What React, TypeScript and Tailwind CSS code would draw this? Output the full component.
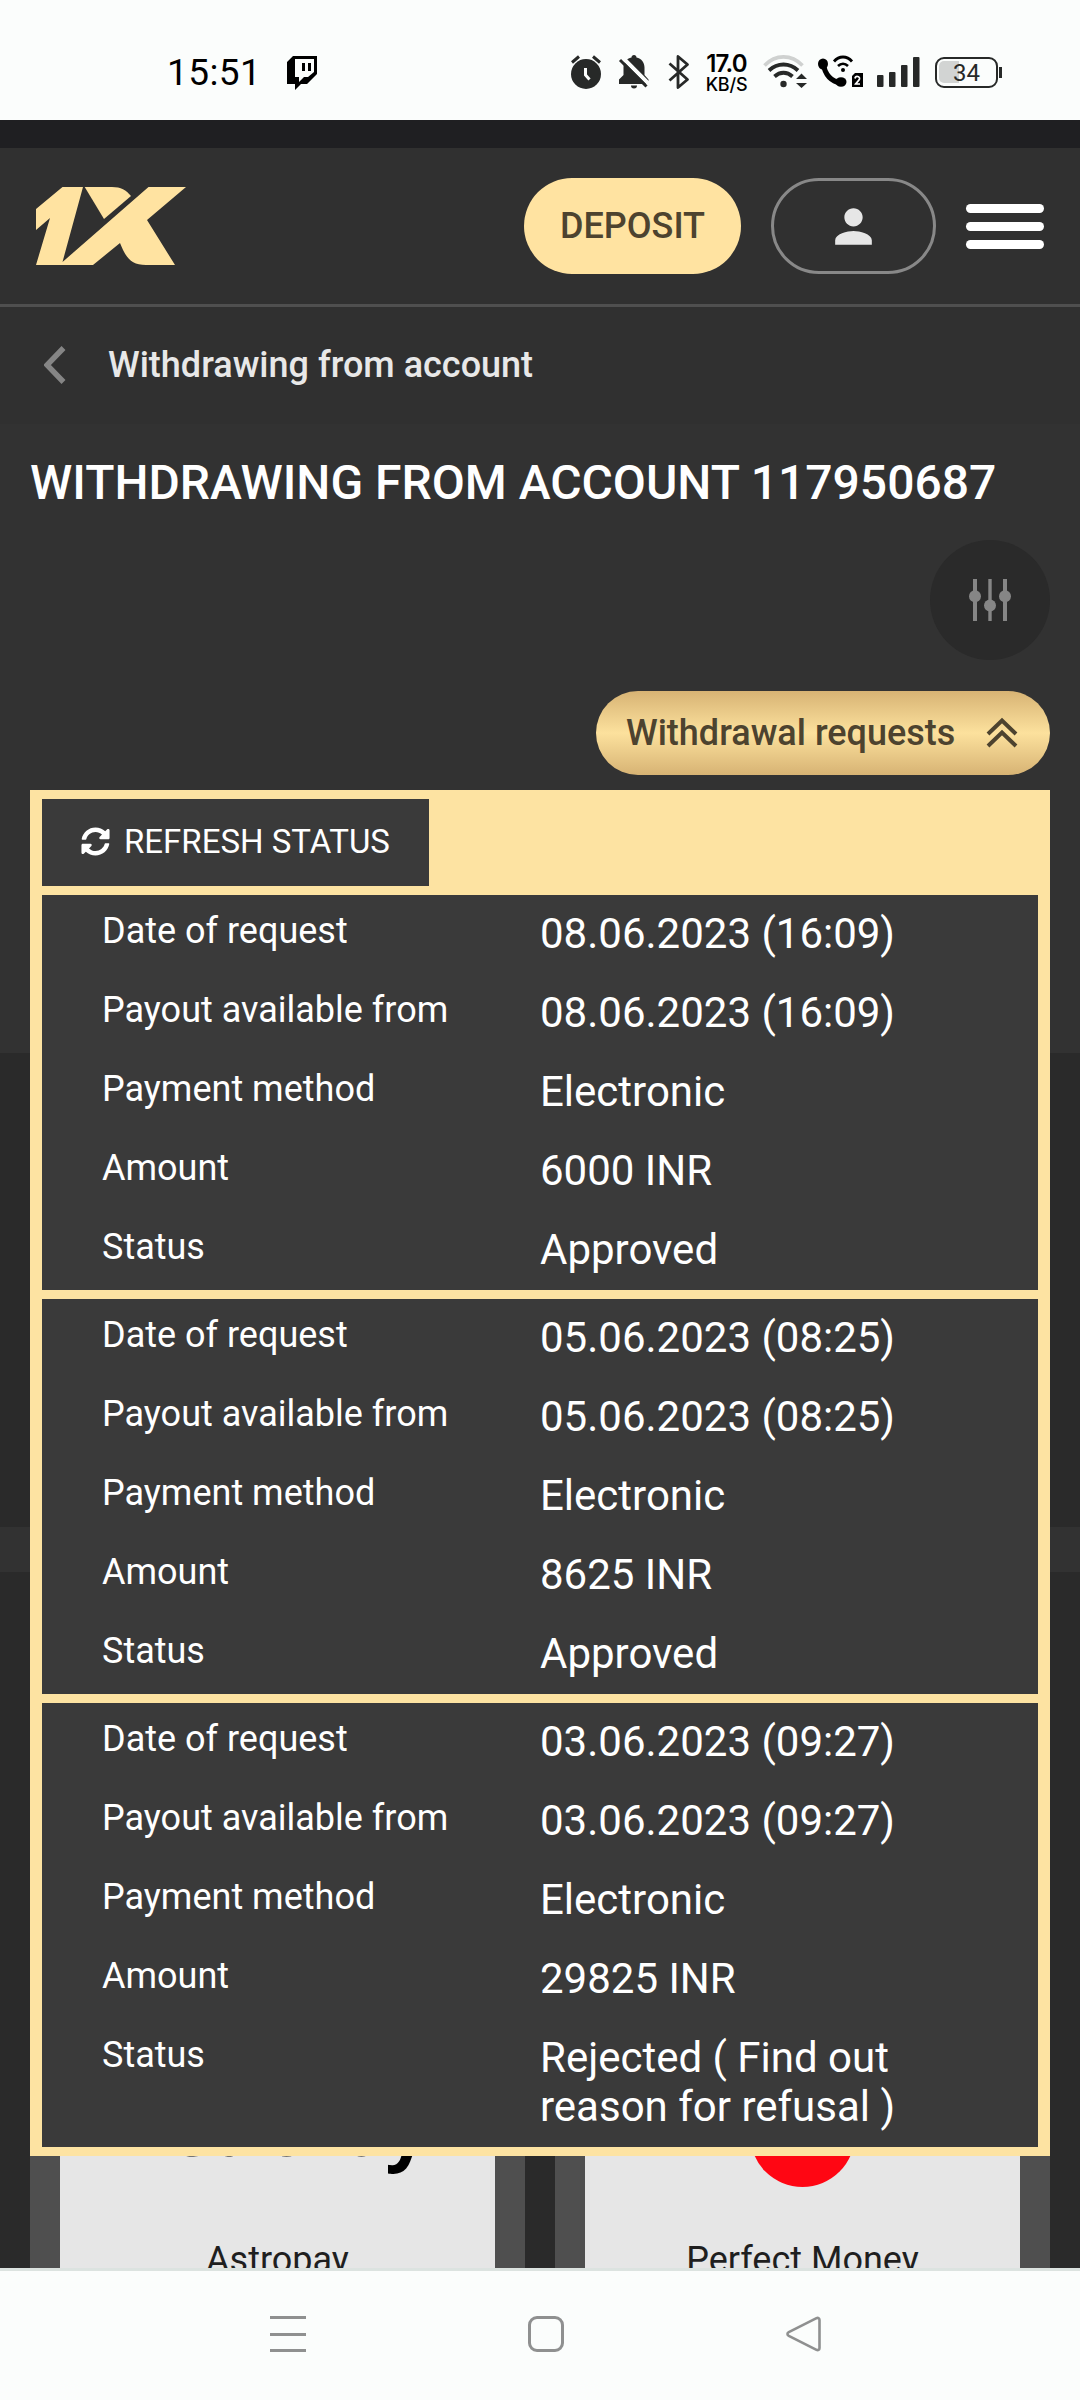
import { FaSyncAlt } from "react-icons/fa";
import { MdPerson } from "react-icons/md";

type Request = {
  date: string;
  payout: string;
  method: string;
  amount: string;
  status: string;
};

const requests: Request[] = [
  { date: "08.06.2023 (16:09)", payout: "08.06.2023 (16:09)", method: "Electronic", amount: "6000 INR", status: "Approved" },
  { date: "05.06.2023 (08:25)", payout: "05.06.2023 (08:25)", method: "Electronic", amount: "8625 INR", status: "Approved" },
  {
    date: "03.06.2023 (09:27)",
    payout: "03.06.2023 (09:27)",
    method: "Electronic",
    amount: "29825 INR",
    status: "Rejected ( Find out reason for refusal )",
  },
];

const StatusBar = () => (
  <div className="flex h-[120px] shrink-0 items-start bg-[#fbfdfc] pl-[167px] pt-[52px] text-black">
    <span className="-mt-px w-[120px] text-[37px] leading-[43px] tracking-[0.4px]">15:51</span>
    <svg className="mt-[3px]" width="32" height="36" viewBox="0 0 32 36">
      <path d="M6 1H30V19L20 29H14L8 35V29H0V7Z" fill="#000" />
      <path d="M8 4H27V17L21 22H17L12 27V22H8Z" fill="#fbfdfc" />
      <path d="M15 8h3v8h-3zM21 8h3v8h-3z" fill="#000" />
    </svg>

    <div className="ml-[250px] flex h-[40px] items-start">
      {/* alarm */}
      <svg width="34" height="40" viewBox="0 0 34 40">
        <circle cx="17" cy="22" r="15" fill="#272928" />
        <path d="M3 10.5L10 4.5M31 10.5L24 4.5" stroke="#272928" strokeWidth="3" />
        <path d="M16.500 16V23L20.500 27.500" stroke="#fbfdfc" strokeWidth="3" fill="none" />
      </svg>
      {/* muted bell */}
      <svg className="ml-[15px]" width="32" height="40" viewBox="0 0 32 40">
        <path d="M16 3c1.500 0 2.500 1 2.500 2.400 5 1.100 8 5 8 10V23l4 4.500V32H1v-4.500L5.500 23v-7.500C5.500 10 8.500 6.500 13.500 5.400 13.500 4 14.500 3 16 3Z" fill="#272928" />
        <path d="M13 33.500h6a3 3 0 0 1-6 0Z" fill="#272928" />
        <path d="M4 5L31 32" stroke="#fbfdfc" strokeWidth="4" />
        <path d="M2 8L28.500 34.500" stroke="#272928" strokeWidth="3" />
      </svg>
      {/* bluetooth */}
      <svg className="ml-[18px]" width="22" height="40" viewBox="0 0 22 40">
        <path d="M1.500 11.500L19.500 27.500L10 35.500V4.500L19.500 12.500L1.500 28.500" stroke="#272928" strokeWidth="2.800" fill="none" strokeLinejoin="round" />
      </svg>
      <div className="ml-[14px] flex w-[45px] flex-col items-center gap-[2px] pt-[2px] font-['Inter'] font-semibold">
        <span className="text-[24px] leading-[20px] tracking-[-0.8px]">17.0</span>
        <span className="text-[18px] font-medium leading-[18px] tracking-[-0.2px]">KB/S</span>
      </div>
      {/* wifi */}
      <svg className="ml-[14px]" width="46" height="40" viewBox="0 0 46 40" fill="none">
        <path d="M1.500 13.500C12.500 2 28.500 2 39.500 13.500" stroke="#cfd1d0" strokeWidth="3.600" />
        <path d="M6 18.500C14.500 10.500 26.500 10.500 35 18.500" stroke="#272928" strokeWidth="3.800" />
        <path d="M11.500 24.500C17 19.500 24 19.500 29.500 24.500" stroke="#272928" strokeWidth="3.800" />
        <circle cx="20.500" cy="32" r="3.200" fill="#272928" />
        <path d="M33 27L38.500 21.500L44 27ZM33 31L44 31L38.500 36Z" fill="#272928" />
      </svg>
      {/* wifi calling */}
      <svg className="ml-[9px]" width="48" height="40" viewBox="0 0 48 40" fill="none">
        <path d="M5 11C7 23 13 29.500 23 31" stroke="#000" strokeWidth="5" />
        <ellipse cx="5" cy="12" rx="5" ry="5.500" fill="#000" />
        <ellipse cx="23" cy="30" rx="5.500" ry="4.800" fill="#000" />
        <path d="M16 9.500C21 3.500 29 3.500 34 9.500" stroke="#000" strokeWidth="2.800" />
        <path d="M20 14C23 11 27 11 30 14" stroke="#000" strokeWidth="2.600" />
        <circle cx="25" cy="18" r="2" fill="#000" />
        <path d="M37 21H45V35H34V24Z" fill="#000" />
        <path d="M37 26.500C37.500 23.500 42 24 41.500 27C41.200 28.500 38 31 37.500 32H42" stroke="#fff" strokeWidth="1.700" />
      </svg>
      {/* signal */}
      <svg className="ml-[11px]" width="44" height="40" viewBox="0 0 44 40" fill="#272928">
        <rect x="0" y="23" width="6.500" height="12" rx="1" />
        <rect x="12" y="20" width="6.500" height="15" rx="1" />
        <rect x="24" y="13" width="6.500" height="22" rx="1" />
        <rect x="36" y="5" width="6.500" height="30" rx="1" />
      </svg>
      {/* battery */}
      <div className="ml-[14px] mt-[5px] flex items-center">
        <div className="relative flex h-[31px] w-[63px] items-center justify-center rounded-[9px] border-[2.500px] border-[#272928]">
          <div className="absolute left-[2px] top-[2px] h-[22px] w-[20px] rounded-l-[5px] bg-[#d2d4d3]" />
          <span className="relative text-[24px] leading-[26px] text-[#272928]">34</span>
        </div>
        <div className="ml-[1px] h-[11px] w-[2.500px] bg-[#272928]" />
      </div>
    </div>
  </div>
);

const Header = () => (
  <header className="flex h-[159px] shrink-0 items-center border-b-[3px] border-[#4f4f4f] bg-[#303030] pl-[36px] pr-[36px]">
    <svg width="150" height="78" viewBox="0 0 150 78" fill="#ffe3a1">
      <path d="M0 22L26.500 0H47L26.500 75L112.500 0H150L111 33L139 78H110C95 78 90 71 84 56L57 78H0L14 31L0 43Z" />
      <path d="M48.700 0H76C85 0 90 3 95 9L68 32Z" />
    </svg>
    <button className="ml-[338px] h-[96px] w-[217px] rounded-full bg-[#ffe3a1] text-[36px] font-medium text-[#4d432f]">DEPOSIT</button>
    <button className="ml-[30px] flex h-[96px] w-[165px] items-center justify-center rounded-full border-[3px] border-[#888888]">
      <MdPerson size={55} color="#e6e6e6" />
    </button>
    <div className="ml-[30px] flex w-[78px] flex-col gap-[9px]">
      <span className="h-[9px] rounded-full bg-white" />
      <span className="h-[9px] rounded-full bg-white" />
      <span className="h-[9px] rounded-full bg-white" />
    </div>
  </header>
);

const Row = ({ label, value }: { label: string; value: string }) => (
  <div className="flex items-start pb-[16px] pt-[14px]">
    <span className="w-[438px] pt-px text-[36px] leading-[42px]">{label}</span>
    <span className="w-[400px] text-[42px] leading-[49px]">{value}</span>
  </div>
);

const RequestCard = ({ item }: { item: Request }) => (
  <div className="bg-[#3a3a3a] pl-[60px]">
    <Row label="Date of request" value={item.date} />
    <Row label="Payout available from" value={item.payout} />
    <Row label="Payment method" value={item.method} />
    <Row label="Amount" value={item.amount} />
    <Row label="Status" value={item.status} />
  </div>
);

const RequestsPanel = () => (
  <section className="absolute left-[30px] top-[790px] flex w-[1020px] flex-col gap-[9px] bg-[#fde3a2] px-[12px] py-[9px] text-white">
    <button className="flex h-[87px] w-[387px] items-center bg-[#3a3a3a] pb-[2px] pl-[39px] text-[33px]">
      <FaSyncAlt size={29} />
      <span className="ml-[14px]">REFRESH STATUS</span>
    </button>
    {requests.map((item) => (
      <RequestCard key={item.date} item={item} />
    ))}
  </section>
);

const NavBar = () => (
  <nav className="flex h-[132px] shrink-0 items-start border-t-[3px] border-[#dce3e0] bg-[#fbfdfc] pl-[270px] pt-[45px]">
    <div className="flex h-[36px] w-[36px] flex-col justify-between">
      <span className="h-[3px] bg-[#8f9090]" />
      <span className="h-[3px] bg-[#8f9090]" />
      <span className="h-[3px] bg-[#8f9090]" />
    </div>
    <div className="ml-[222px] h-[36px] w-[36px] rounded-[9px] border-[3px] border-[#8f9090]" />
    <svg className="ml-[222px]" width="36" height="36" viewBox="0 0 36 36" fill="none">
      <path d="M33.500 4V32C33.500 34 32 34.500 30.500 33.800L2.800 19.800C1 18.800 1 17.200 2.800 16.200L30.500 2.200C32 1.500 33.500 2 33.500 4Z" stroke="#8f9090" strokeWidth="2.600" />
    </svg>
  </nav>
);

export default function App() {
  return (
    <div className="relative flex h-[2400px] w-[1080px] flex-col overflow-hidden bg-[#2a2a2a] font-['Roboto',sans-serif]">
      <StatusBar />
      <div className="h-[28px] shrink-0 bg-[#1f1f22]" />
      <Header />

      <div className="flex h-[117px] shrink-0 items-center bg-[#303030] pb-[2px] pl-[44px]">
        <svg width="22" height="38" viewBox="0 0 22 38" fill="none">
          <path d="M19.500 2L3 19L19.500 36" stroke="#858585" strokeWidth="5.500" />
        </svg>
        <span className="ml-[42px] text-[36px] font-medium text-[#e8e8e8]">Withdrawing from account</span>
      </div>

      <main className="flex h-[629px] shrink-0 flex-col items-end bg-[#323232] px-[30px] pt-[31px] text-white">
        <h1 className="w-full whitespace-nowrap text-[48px] font-medium leading-[56px]">WITHDRAWING FROM ACCOUNT 117950687</h1>
        <div className="mt-[29px] flex h-[120px] w-[120px] items-center justify-center rounded-full bg-[#2a2a2a]">
          <svg width="42" height="42" viewBox="0 0 42 42" fill="#868686">
            <path d="M4 0h4v42h-4zM19.300 0h3.400v42h-3.400zM34 0h4v42h-4z" />
            <circle cx="6" cy="17.300" r="6" />
            <circle cx="21" cy="26.500" r="6" />
            <circle cx="36" cy="17.300" r="6" />
          </svg>
        </div>
        <button className="mt-[31px] flex h-[84px] w-[454px] items-center rounded-full bg-[linear-gradient(#d7b374,#fce19d_50%,#d7b374)] pl-[30px] text-[36px] font-medium text-[#4d432f]">
          Withdrawal requests
          <svg className="ml-[31px]" width="32" height="32" viewBox="0 0 32 32" fill="none">
            <path d="M2 17L16 3.500L30 17M2 29L16 15.500L30 29" stroke="#4d432f" strokeWidth="4" />
          </svg>
        </button>
      </main>

      <div className="h-[474px] shrink-0" />
      <div className="h-[45px] shrink-0 bg-[#323232]" />

      {/* payment methods, mostly covered by the requests panel */}
      <div className="flex h-[696px] shrink-0 items-end gap-[30px] overflow-hidden px-[30px]">
        <div className="h-[200px] w-[495px] bg-[#4f4f4f] px-[30px]">
          <div className="relative h-full bg-[#e6e6e6] text-center text-[36px] text-[#1f1f1f]">
            <span className="absolute left-[71px] top-[10px] font-['Open_Sans'] text-[73px] font-bold leading-[100px] tracking-[-4.6px] text-black">AstroPay</span>
            <p className="pt-[171px] leading-[42px]">Astropay</p>
          </div>
        </div>
        <div className="h-[200px] w-[495px] bg-[#4f4f4f] px-[30px]">
          <div className="relative h-full bg-[#e6e6e6] text-center text-[36px] text-[#1f1f1f]">
            <div className="absolute left-[165px] top-[14px] h-[105px] w-[105px] rounded-full bg-[#ff0613]" />
            <p className="pt-[171px] leading-[42px]">Perfect Money</p>
          </div>
        </div>
      </div>

      <NavBar />
      <RequestsPanel />
    </div>
  );
}
